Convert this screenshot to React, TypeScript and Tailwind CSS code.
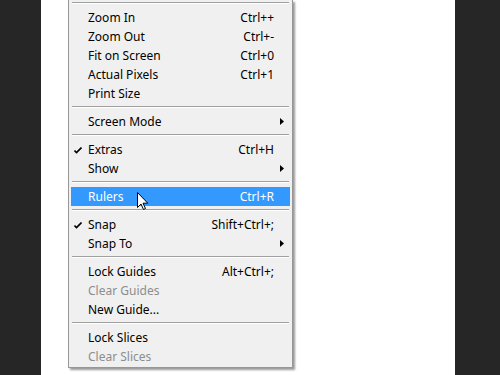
type Item = {
  label?: string;
  shortcut?: string;
  checked?: boolean;
  submenu?: boolean;
  disabled?: boolean;
  active?: boolean;
  separator?: boolean;
};

const items: Item[] = [
  { label: "Zoom In", shortcut: "Ctrl++" },
  { label: "Zoom Out", shortcut: "Ctrl+-" },
  { label: "Fit on Screen", shortcut: "Ctrl+0" },
  { label: "Actual Pixels", shortcut: "Ctrl+1" },
  { label: "Print Size" },
  { separator: true },
  { label: "Screen Mode", submenu: true },
  { separator: true },
  { label: "Extras", shortcut: "Ctrl+H", checked: true },
  { label: "Show", submenu: true },
  { separator: true },
  { label: "Rulers", shortcut: "Ctrl+R", active: true },
  { separator: true },
  { label: "Snap", shortcut: "Shift+Ctrl+;", checked: true },
  { label: "Snap To", submenu: true },
  { separator: true },
  { label: "Lock Guides", shortcut: "Alt+Ctrl+;" },
  { label: "Clear Guides", disabled: true },
  { label: "New Guide..." },
  { separator: true },
  { label: "Lock Slices" },
  { label: "Clear Slices", disabled: true },
];

function Separator({ top = false }: { top?: boolean }) {
  return (
    <div className={top ? "h-[8px] pt-[2px]" : "h-[9px] pt-[3px]"}>
      <div className="mx-[1px] h-px bg-[#a0a0a0]" />
      <div className="mx-[1px] h-px bg-white" />
    </div>
  );
}

function Check() {
  return (
    <svg width="8" height="7" viewBox="0 0 8 7" className="absolute left-[3px] top-[7px]">
      <path d="M0.5 3.5 L2.5 5.5 L7.5 0.5" fill="none" stroke="#000" strokeWidth="1.6" />
    </svg>
  );
}

function Arrow() {
  return (
    <svg width="4" height="7" viewBox="0 0 4 7" className="absolute right-[6px] top-[6px]">
      <path d="M0 0 L4 3.5 L0 7 Z" fill="#000" />
    </svg>
  );
}

function Cursor() {
  return (
    <svg
      width="12"
      height="19"
      viewBox="0 0 12 19"
      className="absolute left-[66px] top-[5px]"
    >
      <path
        d="M0.5 0.5 L0.5 15.5 L4 12 L6.5 17.5 L8.5 16.5 L6 11.2 L10.8 11.2 Z"
        fill="#fff"
        stroke="#000"
        strokeWidth="1"
        strokeLinejoin="miter"
      />
    </svg>
  );
}

function MenuRow({ item }: { item: Item }) {
  const color = item.active
    ? "bg-[#3399ff] text-white"
    : item.disabled
      ? "text-[#8d8d8d]"
      : "text-black";
  return (
    <div className={`relative flex h-[19px] items-center pl-[17px] pr-[16px] ${color}`}>
      {item.checked && <Check />}
      <span className="flex-1 whitespace-nowrap">{item.label}</span>
      {item.shortcut && <span className="whitespace-nowrap">{item.shortcut}</span>}
      {item.submenu && <Arrow />}
      {item.active && <Cursor />}
    </div>
  );
}

export default function App() {
  return (
    <div className="flex h-[375px] w-[500px] overflow-hidden bg-white font-['Noto_Sans',sans-serif] text-[12px]">
      <div className="w-[41px] bg-[#262626]" />
      <div className="flex-1 pl-[27px]">
        <div className="w-[225px] border border-t-0 border-[#979797] bg-[#f0f0f0] px-[2px] pb-[1px] shadow-[2px_2px_2px_rgba(0,0,0,0.4)]">
          <Separator top />
          {items.map((item, i) =>
            item.separator ? <Separator key={i} /> : <MenuRow key={i} item={item} />
          )}
        </div>
      </div>
      <div className="w-[45px] bg-[#262626]" />
    </div>
  );
}
